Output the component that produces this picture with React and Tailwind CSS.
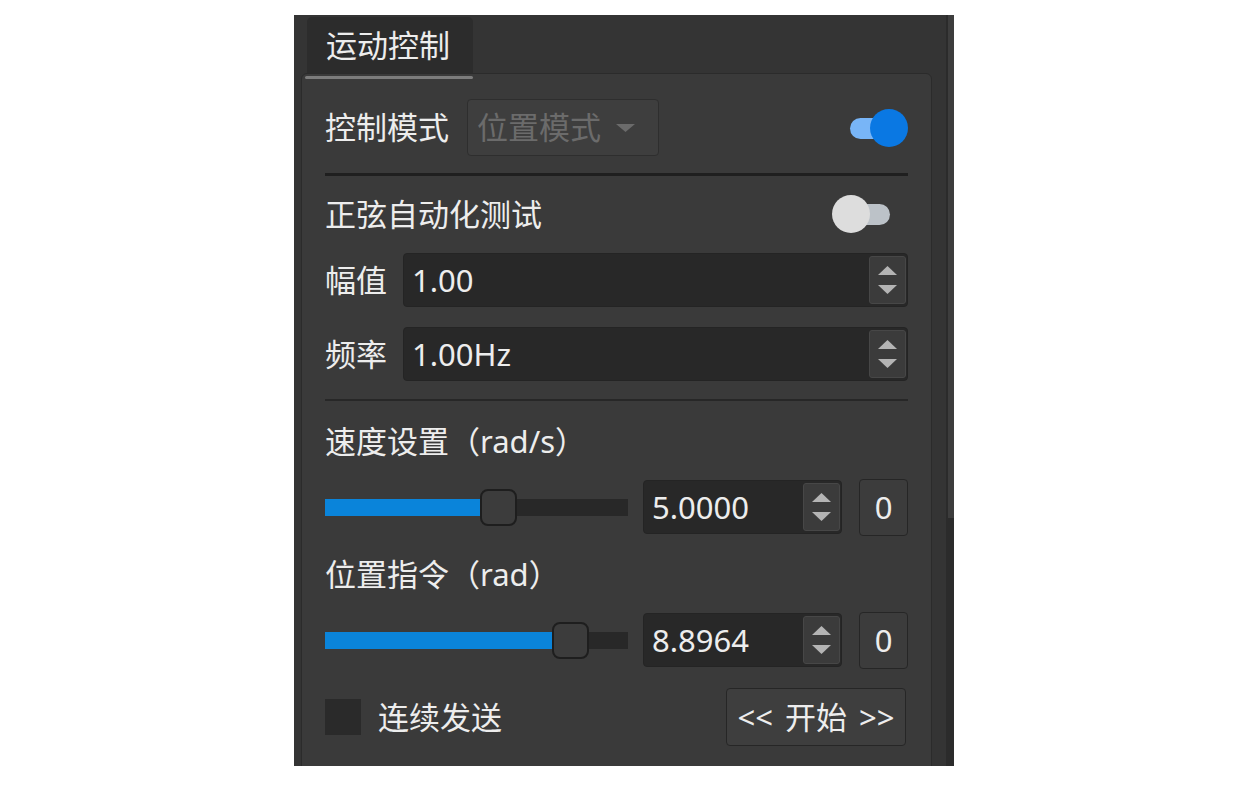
import React from "react";

const font = { fontFamily: '"Noto Sans", "Noto Sans CJK SC", sans-serif' };

const Arrow = ({ up, color = "#b4b4b4" }) => (
    <svg width="19" height="9" viewBox="0 0 19 9">
        {up ? <polygon points="9.5,0 19,9 0,9" fill={color} /> : <polygon points="0,0 19,0 9.5,9" fill={color} />}
    </svg>
);

const Toggle = ({ on }) => (
    <div className="relative h-[38px] w-[76px]">
        <div className={`absolute left-[18px] top-[9px] h-[21px] w-[40px] rounded-full ${on ? "bg-[#78b5f7]" : "bg-[#bcc2c8]"}`} />
        <div className={`absolute top-0 h-[38px] w-[38px] rounded-full ${on ? "right-0 bg-[#0a78e3]" : "left-0 bg-[#dddddd]"}`} />
    </div>
);

const SpinBox = ({ value, width }) => (
    <div className={`flex h-[54px] items-stretch rounded-[4px] border border-[#242424] bg-[#282828] ${width}`}>
        <div className="flex flex-1 items-center pl-[8px] text-[31px] leading-none text-[#ededed]">{value}</div>
        <div className="my-[2px] mr-[1px] flex w-[37px] flex-col items-center justify-center gap-[10px] rounded-[3px] border border-[#474747] bg-[#3b3b3b]">
            <Arrow up />
            <Arrow />
        </div>
    </div>
);

const Slider = ({ pos }) => (
    <div className="relative flex h-[37px] w-[303px] items-center">
        <div className="flex h-[17px] w-full bg-[#282828]">
            <div className="h-full bg-[#0a84da]" style={{ width: pos }} />
        </div>
        <div className="absolute top-0 h-[37px] w-[37px] rounded-[8px] border-2 border-[#1e1e1e] bg-[#3c3c3c]" style={{ left: pos }} />
    </div>
);

const ZeroButton = () => (
    <div className="ml-[17px] flex h-[57px] w-[49px] items-center justify-center rounded-[4px] border border-[#262626] bg-[#3c3c3c] text-[31px] leading-none text-[#ededed]">
        0
    </div>
);

export default function App() {
    return (
        <div className="h-[785px] w-[1250px] bg-white pl-[294px] pt-[15px]" style={font}>
            <div className="flex h-[751px] w-[660px] overflow-hidden bg-[#343434]">
                {/* main column */}
                <div className="w-[652px]">
                    {/* tab */}
                    <div className="ml-[13px] mt-[2px] flex h-[56px] w-[166px] items-center rounded-t-[5px] bg-[#2c2c2c] pl-[19px] text-[31px] leading-none text-[#ededed]">
                        运动控制
                    </div>

                    {/* group box */}
                    <div className="ml-[7px] w-[631px] rounded-[6px] border border-[#2b2b2b] bg-[#3a3a3a] pb-[60px] text-[#ededed]">
                        <div className="ml-[3px] mt-[2px] h-[3px] w-[168px] rounded-full bg-[#7c7c7c]" />

                        <div className="px-[23px]">
                            {/* control mode */}
                            <div className="mt-[20px] flex h-[57px] items-center">
                                <span className="text-[31px] leading-none">控制模式</span>
                                <div className="ml-[18px] flex h-[57px] w-[192px] items-center rounded-[4px] border border-[#2e2e2e] bg-[#3e3e3e] pl-[9px] text-[31px] leading-none text-[#6b6b6b]">
                                    位置模式
                                    <svg className="ml-[15px]" width="19" height="8" viewBox="0 0 19 8">
                                        <polygon points="0,0 19,0 9.5,8" fill="#6b6b6b" />
                                    </svg>
                                </div>
                                <div className="ml-auto">
                                    <Toggle on />
                                </div>
                            </div>

                            <div className="mt-[17px] h-[3px] bg-[#1f1f1f]" />

                            {/* sine test */}
                            <div className="mt-[18px] flex h-[40px] items-center">
                                <span className="text-[31px] leading-none">正弦自动化测试</span>
                                <div className="ml-auto">
                                    <Toggle />
                                </div>
                            </div>

                            <div className="mt-[19px] flex h-[54px] items-center">
                                <span className="w-[78px] text-[31px] leading-none">幅值</span>
                                <SpinBox value="1.00" width="flex-1" />
                            </div>

                            <div className="mt-[20px] flex h-[54px] items-center">
                                <span className="w-[78px] text-[31px] leading-none">频率</span>
                                <SpinBox value="1.00Hz" width="flex-1" />
                            </div>

                            <div className="mt-[18px] h-[2px] bg-[#272727]" />

                            {/* speed */}
                            <div className="mt-[20px] flex h-[40px] items-center text-[31px] leading-none">速度设置（rad/s）</div>
                            <div className="mt-[19px] flex h-[54px] items-center">
                                <Slider pos={155} />
                                <div className="ml-[15px]">
                                    <SpinBox value="5.0000" width="w-[199px]" />
                                </div>
                                <ZeroButton />
                            </div>

                            {/* position */}
                            <div className="mt-[20px] flex h-[40px] items-center text-[31px] leading-none">位置指令（rad）</div>
                            <div className="mt-[19px] flex h-[54px] items-center">
                                <Slider pos={227} />
                                <div className="ml-[15px]">
                                    <SpinBox value="8.8964" width="w-[199px]" />
                                </div>
                                <ZeroButton />
                            </div>

                            {/* bottom */}
                            <div className="mt-[21px] flex h-[58px] items-center">
                                <div className="h-[36px] w-[36px] bg-[#2a2a2a]" />
                                <span className="ml-[17px] text-[31px] leading-none">连续发送</span>
                                <div className="ml-auto mr-[2px] flex h-[58px] w-[180px] items-center justify-center gap-[12px] rounded-[4px] border border-[#262626] bg-[#3e3e3e] text-[31px] leading-none">
                                    <span>&lt;&lt;</span>
                                    <span>开始</span>
                                    <span>&gt;&gt;</span>
                                </div>
                            </div>
                        </div>
                    </div>
                </div>

                {/* scrollbar */}
                <div className="w-[2px] bg-[#2b2b2b]" />
                <div className="flex w-[6px] flex-col">
                    <div className="h-[503px] bg-[#3d3d3d]" />
                    <div className="flex-1 bg-[#2b2b2b]" />
                </div>
            </div>
        </div>
    );
}
